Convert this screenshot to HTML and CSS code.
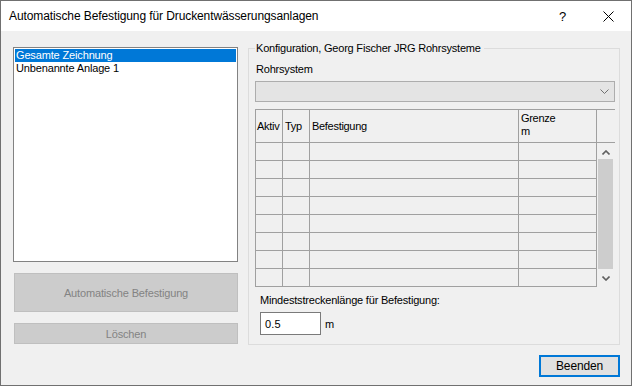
FILE: index.html
```html
<!DOCTYPE html>
<html lang="de">
<head>
<meta charset="utf-8">
<title>Automatische Befestigung</title>
<link rel="stylesheet" href="styles.css">
</head>
<body>
<div class="window">
  <div class="titlebar">
    <span class="title">Automatische Befestigung für Druckentwässerungsanlagen</span>
    <span class="help">?</span>
    <svg class="close" width="11" height="11" viewBox="0 0 11 11"><path d="M0.5 0.5 L10.5 10.5 M10.5 0.5 L0.5 10.5" stroke="#000" stroke-width="1" fill="none"/></svg>
  </div>
  <div class="content">
    <div class="main">
      <div class="left">
        <div class="listbox">
          <div class="item selected">Gesamte Zeichnung</div>
          <div class="item">Unbenannte Anlage 1</div>
        </div>
        <div class="btn disabled tall">Automatische Befestigung</div>
        <div class="btn disabled short">Löschen</div>
      </div>
      <div class="group">
        <div class="legend">Konfiguration, Georg Fischer JRG Rohrsysteme</div>
        <div class="label">Rohrsystem</div>
        <div class="combo">
          <svg class="chev" width="9" height="5" viewBox="0 0 9 5"><path d="M0.5 0.5 L4.5 4.5 L8.5 0.5" stroke="#707070" stroke-width="1" fill="none"/></svg>
        </div>
        <div class="grid">
          <div class="grid-head">
            <div class="hc">Aktiv</div>
            <div class="hc">Typ</div>
            <div class="hc">Befestigung</div>
            <div class="hc top">Grenze<br>m</div>
            <div class="hc last"></div>
          </div>
          <div class="grid-body">
            <div class="rows">
              <div class="row"><div class="c"></div><div class="c"></div><div class="c"></div><div class="c"></div></div>
              <div class="row"><div class="c"></div><div class="c"></div><div class="c"></div><div class="c"></div></div>
              <div class="row"><div class="c"></div><div class="c"></div><div class="c"></div><div class="c"></div></div>
              <div class="row"><div class="c"></div><div class="c"></div><div class="c"></div><div class="c"></div></div>
              <div class="row"><div class="c"></div><div class="c"></div><div class="c"></div><div class="c"></div></div>
              <div class="row"><div class="c"></div><div class="c"></div><div class="c"></div><div class="c"></div></div>
              <div class="row"><div class="c"></div><div class="c"></div><div class="c"></div><div class="c"></div></div>
              <div class="row"><div class="c"></div><div class="c"></div><div class="c"></div><div class="c"></div></div>
            </div>
            <div class="scrollbar">
              <div class="sb-btn up"><svg width="8" height="5" viewBox="0 0 8 5"><path d="M0.5 4.5 L4 1 L7.5 4.5" stroke="#606060" stroke-width="1.6" fill="none"/></svg></div>
              <div class="thumb"></div>
              <div class="sb-btn down"><svg width="8" height="5" viewBox="0 0 8 5"><path d="M0.5 0.5 L4 4 L7.5 0.5" stroke="#606060" stroke-width="1.6" fill="none"/></svg></div>
            </div>
          </div>
        </div>
        <div class="label indent">Mindeststreckenlänge für Befestigung:</div>
        <div class="input-row">
          <div class="textbox">0.5</div>
          <span class="unit">m</span>
        </div>
      </div>
    </div>
    <div class="footer">
      <div class="btn default">Beenden</div>
    </div>
  </div>
</div>
</body>
</html>
```

FILE: styles.css
```css
* { box-sizing: border-box; }
html, body { margin: 0; padding: 0; }
body {
  width: 632px;
  height: 386px;
  overflow: hidden;
  font-family: "Liberation Sans", Arial, sans-serif;
  font-size: 11px;
  color: #000;
}
.window {
  width: 632px;
  height: 386px;
  border: 1px solid #707070;
  display: flex;
  flex-direction: column;
  background: #f0f0f0;
}
.titlebar {
  height: 30px;
  flex: none;
  background: #fff;
  display: flex;
  align-items: center;
  padding-left: 8px;
}
.title {
  font-size: 12px;
  flex: 1;
  letter-spacing: -0.1px;
}
.help {
  font-size: 13px;
  width: 10px;
  margin-right: 34px;
}
.close {
  margin-right: 17px;
}
.content {
  flex: 1;
  padding: 16px 11px 0 12px;
  display: flex;
  flex-direction: column;
}
.main {
  display: flex;
  align-items: flex-start;
}
.left {
  width: 226px;
  display: flex;
  flex-direction: column;
}
.listbox {
  height: 215px;
  border: 1px solid #828282;
  background: #fff;
  padding: 1px;
}
.item {
  height: 13px;
  line-height: 13px;
  padding-left: 1px;
  width: 221px;
  letter-spacing: -0.15px;
}
.item.selected {
  background: #0078d7;
  color: #fff;
}
.btn {
  display: flex;
  align-items: center;
  justify-content: center;
  letter-spacing: -0.15px;
}
.btn.disabled {
  background: #cccccc;
  border: 1px solid #bfbfbf;
  color: #838383;
  margin-left: 1px;
  width: 224px;
}
.btn.tall { height: 39px; margin-top: 11px; }
.btn.short { height: 21px; margin-top: 11px; }
.group {
  margin-left: 10px;
  margin-top: 1px;
  width: 372px;
  border: 1px solid #dcdcdc;
  padding: 0 4px 9px 6px;
  display: flex;
  flex-direction: column;
}
.legend {
  align-self: flex-start;
  margin-top: -7px;
  line-height: 13px;
  padding: 0 3px 0 1px;
  background: #f0f0f0;
  letter-spacing: -0.2px;
}
.label {
  line-height: 13px;
  margin-top: 8px;
  padding-left: 1px;
  letter-spacing: -0.2px;
}
.label.indent {
  margin-top: 7px;
  padding-left: 5px;
}
.combo {
  margin-top: 5px;
  height: 21px;
  width: 360px;
  background: #e4e4e4;
  border: 1px solid #adadad;
  display: flex;
  align-items: center;
  justify-content: flex-end;
  padding-right: 5px;
}
.grid {
  margin-top: 7px;
  width: 360px;
  display: flex;
  flex-direction: column;
}
.grid-head {
  display: grid;
  grid-template-columns: 28px 27px 209px 78px 18px;
  height: 34px;
  border-top: 1px solid #a0a0a0;
  border-bottom: 1px solid #a0a0a0;
}
.hc {
  border-right: 1px solid #a0a0a0;
  display: flex;
  align-items: center;
  padding-left: 2px;
  line-height: 13px;
  letter-spacing: -0.3px;
}
.hc:first-child { border-left: 1px solid #a0a0a0; padding-left: 1px; }
.hc.top { align-items: flex-start; padding-top: 2px; }
.hc.last { border-right: none; }
.grid-body {
  display: flex;
}
.rows {
  width: 342px;
  display: flex;
  flex-direction: column;
}
.row {
  display: grid;
  grid-template-columns: 28px 27px 209px 78px;
  height: 18px;
  border-bottom: 1px solid #a0a0a0;
}
.c { border-right: 1px solid #a0a0a0; }
.c:first-child { border-left: 1px solid #a0a0a0; }
.scrollbar {
  width: 18px;
  height: 144px;
  display: flex;
  flex-direction: column;
  padding: 0 2px 0 1px;
}
.sb-btn {
  display: flex;
  align-items: center;
  justify-content: center;
}
.sb-btn.up { height: 16px; padding-top: 2px; }
.thumb { height: 110px; background: #cdcdcd; }
.sb-btn.down { height: 18px; padding-top: 1px; }
.input-row {
  margin-top: 5px;
  display: flex;
  align-items: center;
  padding-left: 5px;
}
.textbox {
  width: 61px;
  height: 23px;
  background: #fff;
  border: 1px solid #7a7a7a;
  padding-left: 4px;
  display: flex;
  align-items: center;
  letter-spacing: 0.2px;
}
.unit { margin-left: 4px; }
.footer {
  display: flex;
  justify-content: flex-end;
  margin-top: 10px;
}
.btn.default {
  width: 81px;
  height: 22px;
  background: #e1e1e1;
  border: 2px solid #0078d7;
  font-size: 12px;
}
```
